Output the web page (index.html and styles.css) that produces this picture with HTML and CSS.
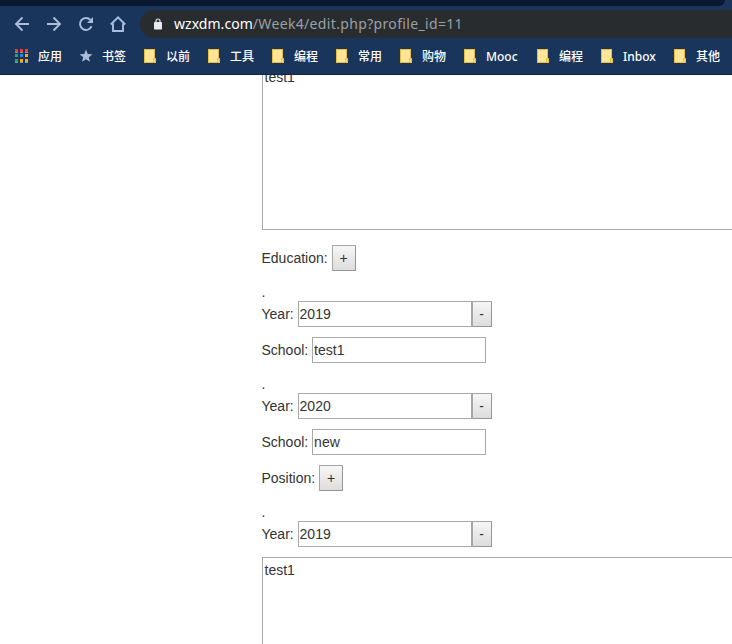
FILE: index.html
```
<!DOCTYPE html>
<html lang="zh-CN">
<head>
<meta charset="utf-8">
<title>Edit profile</title>
<link rel="stylesheet" href="styles.css">
</head>
<body>
<svg width="0" height="0" class="defs">
  <symbol id="folder" viewBox="0 0 16 16"><path d="M2 1h11v9h1v5H2z" fill="#e9bf45"/><path d="M3 2h9v8h-1v4H3z" fill="#ffe694"/><path d="M12 11h1v3h-1z" fill="#ffe07a"/></symbol>
</svg>
<header class="browser">
  <div class="tabstrip"></div>
  <div class="toolbar">
    <svg class="nav" viewBox="0 0 16 16"><path d="M15 8H2M8.500 1.500 2 8l6.500 6.500"/></svg>
    <svg class="nav" viewBox="0 0 16 16"><path d="M1 8h13M7.500 1.500 14 8l-6.500 6.500"/></svg>
    <svg class="nav" viewBox="0 0 16 16"><path d="M13.600 10.200A6 6 0 1 1 12.400 3.800"/><path class="solid" d="M15 1v6H9z"/></svg>
    <svg class="nav" viewBox="0 0 16 16"><path d="M.8 8.500 8 1.400l7.200 7.100M3 7.500V15h10V7.500"/></svg>
    <div class="address">
      <svg class="lock" viewBox="0 0 8 12"><path d="M2 5V3a2 2 0 0 1 4 0v2" fill="none" stroke="#e8eaed" stroke-width="1.200"/><rect y="4" width="8" height="7.500" rx=".8" fill="#e8eaed"/></svg>
      <span class="url"><b>wzxdm.com</b>/Week4/edit.php?profile_id=11</span>
    </div>
  </div>
  <nav class="bookmarks">
    <div class="bookmark"><svg viewBox="0 0 16 16"><path fill="#f23c32" d="M1 1h3v3H1zM6 1h3v3H6zM11 1h3v3h-3z"/><path fill="#35a35a" d="M1 6h3v3H1zM1 11h3v3H1z"/><path fill="#2486f5" d="M6 6h3v3H6z"/><path fill="#f9ac08" d="M11 6h3v3h-3zM6 11h3v3H6zM11 11h3v3h-3z"/><path fill="#8296b4" d="M1 4h3v1H1zM6 4h3v1H6zM11 4h3v1h-3zM1 14h3v1H1zM6 14h3v1H6zM11 14h3v1h-3z"/></svg><span>应用</span></div>
    <div class="bookmark"><svg viewBox="0 0 16 16"><path fill="#a9bddd" d="m8 1.500 1.700 4.400 4.800.3-3.700 3 1.200 4.600L8 11.300l-4 2.500 1.200-4.600-3.700-3 4.800-.3z"/></svg><span>书签</span></div>
    <div class="bookmark"><svg><use href="#folder"/></svg><span>以前</span></div>
    <div class="bookmark"><svg><use href="#folder"/></svg><span>工具</span></div>
    <div class="bookmark"><svg><use href="#folder"/></svg><span>编程</span></div>
    <div class="bookmark"><svg><use href="#folder"/></svg><span>常用</span></div>
    <div class="bookmark"><svg><use href="#folder"/></svg><span>购物</span></div>
    <div class="bookmark latin"><svg><use href="#folder"/></svg><span>Mooc</span></div>
    <div class="bookmark"><svg><use href="#folder"/></svg><span>编程</span></div>
    <div class="bookmark latin"><svg><use href="#folder"/></svg><span>Inbox</span></div>
    <div class="bookmark"><svg><use href="#folder"/></svg><span>其他</span></div>
  </nav>
</header>
<main class="page">
  <form>
    <textarea class="summary">test1</textarea>
    <div class="row">Education: <button type="button" class="add">+</button></div>
    <div class="dot">.</div>
    <div class="row">Year: <input value="2019"><button type="button" class="remove">-</button></div>
    <div class="row">School: <input value="test1"></div>
    <div class="dot">.</div>
    <div class="row">Year: <input value="2020"><button type="button" class="remove">-</button></div>
    <div class="row">School: <input value="new"></div>
    <div class="row">Position: <button type="button" class="add">+</button></div>
    <div class="dot">.</div>
    <div class="row">Year: <input value="2019"><button type="button" class="remove">-</button></div>
    <textarea>test1</textarea>
  </form>
</main>
</body>
</html>
```
FILE: styles.css
```
* { box-sizing: border-box; }
body {
  margin: 0;
  height: 644px;
  overflow: hidden;
  background: #fff;
  color: #333;
  font: 14px/20px "Liberation Sans", Arial, sans-serif;
  display: flex;
  flex-direction: column;
}
.defs { position: absolute; }
.browser {
  flex: none;
  height: 75px;
  background: #1a355b;
  border-bottom: 1px solid #0f2546;
}
.tabstrip {
  height: 6px;
  width: 725px;
  background: #0a1931;
  border-bottom-right-radius: 6px;
}
.toolbar {
  height: 36px;
  padding-left: 14px;
  display: flex;
  align-items: center;
  gap: 16px;
}
.nav {
  flex: none;
  width: 16px;
  height: 16px;
  fill: none;
  stroke: #a9bddd;
  stroke-width: 1.9;
}
.nav .solid { fill: #a9bddd; stroke: none; }
.address {
  flex: 1;
  height: 28px;
  margin: 0 -20px 0 -2px;
  padding-left: 14px;
  border-radius: 14px 0 0 14px;
  background: #292c2f;
  display: flex;
  align-items: center;
  gap: 12px;
}
.lock { width: 8px; height: 12px; }
.url {
  font: 14px/20px "Noto Sans", sans-serif;
  letter-spacing: .34px;
  color: #9aa0a6;
  white-space: nowrap;
}
.url b { font-weight: 400; letter-spacing: .04px; color: #fff; }
.bookmarks {
  height: 28px;
  padding-left: 14px;
  display: flex;
  align-items: center;
  gap: 16px;
}
.bookmark {
  flex: none;
  display: flex;
  align-items: center;
  gap: 8px;
  color: #fff;
  font: 500 12px/18px "Noto Sans", "Noto Sans CJK SC", sans-serif;
}
.bookmark svg { width: 16px; height: 16px; }
.bookmark span { width: 24px; padding-top: 2px; white-space: nowrap; }
.bookmark.latin span { width: 33px; }
.page {
  flex: 1;
  min-height: 0;
  overflow: hidden;
  padding-left: 261.5px;
}
form { width: 600px; }
textarea {
  display: block;
  width: 100%;
  height: 166px;
  padding: 2px;
  border: 1px solid #a9a9a9;
  border-radius: 0;
  font: inherit;
  color: inherit;
  resize: none;
}
.summary { margin: -11px 0 15px; }
.row {
  height: 26px;
  margin-bottom: 10px;
  line-height: 26px;
  display: flex;
  white-space: pre;
}
.dot { height: 20px; line-height: 22px; }
input, button {
  height: 26px;
  font: inherit;
  line-height: 20px;
  color: inherit;
  border-radius: 0;
}
input {
  width: 174px;
  padding: 1px;
  border: 1px solid #a9a9a9;
}
button {
  padding: 0;
  border: 1px solid #a6a6a6;
  border-right-color: #959595;
  border-bottom-color: #959595;
  border-radius: 1px;
  background: linear-gradient(#f6f6f6, #ddd);
}
.add { width: 24px; }
.remove { width: 20px; }
```
